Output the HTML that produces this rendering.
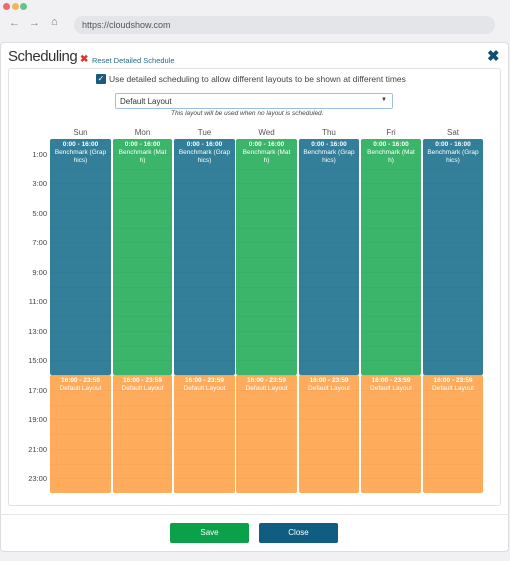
<!DOCTYPE html>
<html><head><style>
*{box-sizing:border-box;margin:0;padding:0}
body{width:510px;height:561px;background:#f1f1f3;font-family:"Liberation Sans",sans-serif;position:relative;overflow:hidden}
.abs{position:absolute}
.dot{width:7px;height:7px;border-radius:50%;top:3px}
.url{left:74px;top:16px;width:421px;height:18px;border-radius:9px;background:#e4e5e9;font-size:9px;color:#555;padding:4px 0 0 8px}
.dlg{left:0;top:42px;width:509px;height:510px;background:#fff;border:1px solid #ddd;border-radius:4px}
.panel{left:8px;top:68px;width:493px;height:438px;border:1px solid #e2e2e2;border-radius:3px}
.day{top:128px;font-size:8px;color:#555;text-align:center}
.col{top:139px}
.blk{position:absolute;left:0;right:0;border-radius:2px;color:#fff;font-size:6.5px;text-align:center;line-height:8px;padding-top:2px}
.blk b{display:block}
.hr{left:16px;width:31px;text-align:right;font-size:7.5px;color:#444}
.btn{top:523px;width:79px;height:20px;border-radius:2px;color:#fff;font-size:8px;text-align:center;line-height:20px}
</style></head><body>
<div class="abs dot" style="left:3px;background:#ee6a6a"></div>
<div class="abs dot" style="left:12px;background:#f5b35a"></div>
<div class="abs dot" style="left:20px;background:#5fc78a"></div>
<div class="abs" style="left:9px;top:17px;font-size:11px;color:#888">&#8592;</div>
<div class="abs" style="left:29px;top:17px;font-size:11px;color:#888">&#8594;</div>
<div class="abs" style="left:51px;top:16px;font-size:11px;color:#777">&#8962;</div>
<div class="abs url">https://cloudshow.com</div>
<div class="abs dlg"></div>
<div class="abs" style="left:8px;top:48px;font-size:15px;color:#333;letter-spacing:-0.5px">Scheduling</div>
<div class="abs" style="left:80px;top:54px;font-size:10px;color:#d33;font-weight:bold">&#10006;</div>
<div class="abs" style="left:92px;top:56px;font-size:7.5px;color:#2a6a8a">Reset Detailed Schedule</div>
<div class="abs" style="left:487px;top:47px;font-size:15px;color:#0d4e70;font-weight:bold">&#10006;</div>
<div class="abs panel"></div>
<div class="abs" style="left:96px;top:74px;width:10px;height:10px;background:#1a5a7d;border-radius:1px;color:#fff;font-size:8px;line-height:10px;text-align:center">&#10003;</div>
<div class="abs" style="left:109px;top:74px;font-size:8.5px;color:#444">Use detailed scheduling to allow different layouts to be shown at different times</div>
<div class="abs" style="left:115px;top:93px;width:278px;height:16px;border:1px solid #9ec0e6;border-radius:2px;font-size:8px;color:#333;padding:3px 0 0 4px">Default Layout<span style="position:absolute;right:5px;top:3px;font-size:6px">&#9660;</span></div>
<div class="abs" style="left:171px;top:110px;font-size:6.5px;color:#444;font-style:italic">This layout will be used when no layout is scheduled.</div>
<div id="g"></div>
<div class="abs" style="left:0;top:514px;width:509px;border-top:1px solid #e6e6e6"></div>
<div class="abs btn" style="left:170px;background:#0ba04a">Save</div>
<div class="abs btn" style="left:259px;background:#0f5d80">Close</div>
<script>
var xs=[[50,61],[113,59],[174,61],[236,61],[299,60],[361,60],[423,60]],d=["Sun","Mon","Tue","Wed","Thu","Fri","Sat"],h="";
for(var i=0;i<7;i++){var x=xs[i][0],w=xs[i][1],b=i%2==0,c=b?"#337e99":"#3ab56a";
h+='<div class="abs day" style="left:'+x+'px;width:'+w+'px">'+d[i]+'</div>';
h+='<div class="abs col" style="left:'+x+'px;width:'+w+'px;height:354px">';
h+='<div class="blk" style="top:0;height:236px;background:'+c+'"><b>0:00 - 16:00</b>'+(b?'Benchmark (Grap<br>hics)':'Benchmark (Mat<br>h)')+'</div>';
h+='<div class="blk" style="top:236px;height:118px;background:#ffab5c"><b>16:00 - 23:59</b>Default Layout</div>';
for(var k=1;k<24;k++)h+='<div style="position:absolute;left:0;right:0;top:'+(k*14.75)+'px;border-top:1px solid rgba(0,0,0,0.025)"></div>';
h+='</div>';}
for(var k=1;k<24;k+=2)h+='<div class="abs hr" style="top:'+(139+k*14.75-4)+'px">'+k+':00</div>';
document.getElementById("g").innerHTML=h;
</script>
</body></html>
